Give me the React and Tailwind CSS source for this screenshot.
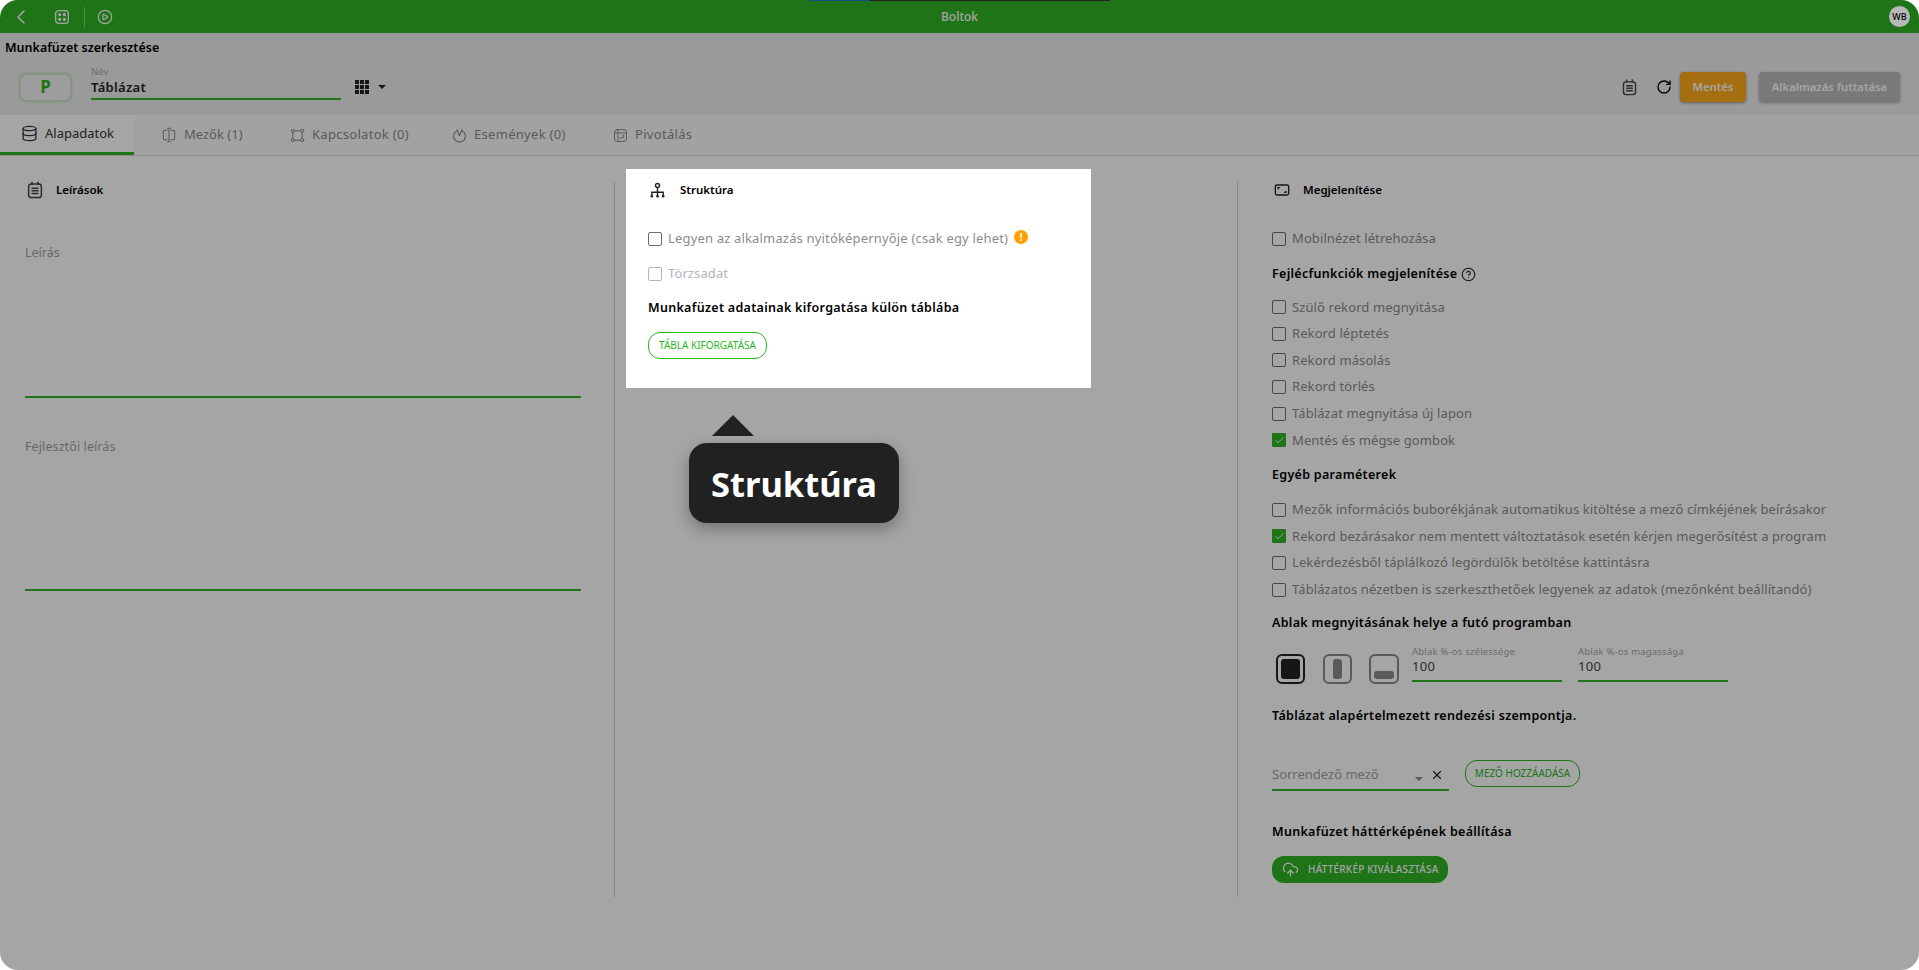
import React from "react";
import { ChevronLeft, CirclePlay, RotateCw, Database, CloudUpload, X, CircleHelp, Check } from "lucide-react";

function Svg({ className = "", children, fill = "none", sw = 1.6 }) {
  return (
    <svg viewBox="0 0 24 24" fill={fill} stroke="currentColor" strokeWidth={sw} strokeLinecap="round" strokeLinejoin="round" className={className}>
      {children}
    </svg>
  );
}

function NotepadIcon({ className }) {
  return (
    <Svg className={className} sw={2}>
      <rect x="3.5" y="4" width="17" height="18" rx="3.5" />
      <path d="M8 1.5v3M16 1.5v3M8 9.5h8M8 13h8M8 16.5h8" />
    </Svg>
  );
}

function DiceIcon({ className }) {
  return (
    <Svg className={className} sw={2}>
      <rect x="2.5" y="2.5" width="19" height="19" rx="5" />
      <circle cx="8.5" cy="8.5" r="1.4" fill="currentColor" />
      <circle cx="15.5" cy="8.5" r="1.4" fill="currentColor" />
      <circle cx="8.5" cy="15.5" r="1.4" fill="currentColor" />
      <circle cx="15.5" cy="15.5" r="1.4" fill="currentColor" />
    </Svg>
  );
}

function FieldsIcon({ className }) {
  return (
    <Svg className={className}>
      <path d="M9 5H5a1.5 1.5 0 0 0-1.5 1.5v11A1.5 1.5 0 0 0 5 19h4M15 5h4a1.5 1.5 0 0 1 1.5 1.5v11a1.5 1.5 0 0 1-1.5 1.5h-4M12 2v20M9.5 2h5M9.5 22h5" />
    </Svg>
  );
}

function LinksIcon({ className }) {
  return (
    <Svg className={className}>
      <circle cx="4.5" cy="4.5" r="2.5" />
      <circle cx="19.5" cy="4.5" r="2.5" />
      <circle cx="4.5" cy="19.5" r="2.5" />
      <circle cx="19.5" cy="19.5" r="2.5" />
      <path d="M7 4.5h10M7 19.5h10M4.5 7v10M19.5 7v10" />
    </Svg>
  );
}

function EventsIcon({ className }) {
  return (
    <Svg className={className} sw={1.8}>
      <path d="M8 4.5a9.5 9.5 0 1 0 8 0" />
      <path d="M8 2.5l4 10 4-10" />
    </Svg>
  );
}

function PivotIcon({ className }) {
  return (
    <Svg className={className}>
      <rect x="2.5" y="2.5" width="19" height="19" rx="4" />
      <path d="M2.5 8h19M8 2.5v19M17 12v3.5h-4M15.5 11l1.5 1M11.5 15.5l1.5 1.500" />
    </Svg>
  );
}

function NetworkIcon({ className }) {
  return (
    <svg viewBox="0 0 24 24" fill="none" stroke="currentColor" strokeWidth="2" className={className}>
      <circle cx="12" cy="5" r="2.8" />
      <path d="M12 8v6M4 20v-5.5h16V20M12 14v6" />
      <circle cx="4" cy="20" r="1.8" fill="currentColor" stroke="none" />
      <circle cx="12" cy="20" r="1.8" fill="currentColor" stroke="none" />
      <circle cx="20" cy="20" r="1.8" fill="currentColor" stroke="none" />
    </svg>
  );
}

function ScreenIcon({ className }) {
  return (
    <Svg className={className} sw={2}>
      <rect x="2" y="4.5" width="20" height="15" rx="2.5" />
      <path d="M6 10V8.5h2M18 14v1.5h-2" />
    </Svg>
  );
}

function Checkbox({ checked, faded }) {
  if (checked) {
    return (
      <span className="w-[14px] h-[14px] rounded-[1px] bg-[#32b426] flex items-center justify-center shrink-0">
        <Check className="w-[11px] h-[11px] text-white" strokeWidth={2} />
      </span>
    );
  }
  return <span className={`w-[14px] h-[14px] rounded-[2px] border-[1.5px] shrink-0 ${faded ? "border-[#b5b5b5]" : "border-[#6f6f6f]"}`} />;
}

function CheckRow({ label, checked, faded, className = "h-[26.6px]", labelClass = "tracking-[0.1px]" }) {
  return (
    <div className={`flex items-center gap-[6px] ${className}`}>
      <Checkbox checked={checked} faded={faded} />
      <span className={`text-[13px] ${labelClass} ${faded ? "text-[#b4b4bc]" : "text-[#8c8c8c]"}`}>{label}</span>
    </div>
  );
}

function SectionHead({ icon, title, gap }) {
  return (
    <div className={`flex items-center h-[16px] ${gap}`}>
      {icon}
      <span className="text-[11.5px] font-semibold text-black">{title}</span>
    </div>
  );
}

function Heading({ children, className = "" }) {
  return <div className={`h-[22px] flex items-center text-[12.5px] tracking-[0.3px] font-semibold text-black ${className}`}>{children}</div>;
}

function Tab({ icon, label, active, className = "", labelClass = "" }) {
  return (
    <div className={`h-[40px] flex items-center gap-[7px] shrink-0 ${active ? "bg-white border-b-[3px] border-[#32b426] text-[#333]" : "text-[#8c8c8c]"} ${className}`}>
      {icon}
      <span className={`text-[13px] ${labelClass}`}>{label}</span>
    </div>
  );
}

function PercentField({ label, className = "" }) {
  return (
    <div className={`w-[150px] h-[36px] -mt-[2px] border-b-2 border-[#32b426] ${className}`}>
      <div className="text-[9.5px] tracking-[0.2px] leading-[11px] text-[#a8a8a8]">{label}</div>
      <div className="text-[13px] tracking-[0.3px] leading-[19px] text-[#444]">100</div>
    </div>
  );
}

function WindowOption({ selected, children, className = "" }) {
  return (
    <div className={`w-[29px] h-[30px] rounded-[6px] border-2 flex p-[3px] ${selected ? "border-[#222]" : "border-[#8c8c8c]"} ${className}`}>
      {children}
    </div>
  );
}

export default function App() {
  return (
    <div className="relative w-full h-[970px] bg-white overflow-hidden font-['Noto_Sans',sans-serif]">
      <div className="h-full rounded-[18px] overflow-hidden flex flex-col bg-white">
        {/* top bar */}
        <div className="relative h-[33px] shrink-0 bg-[#32b426] flex items-center text-white">
          <div className="absolute top-0 left-[809px] w-[301px] h-px bg-[#333]">
            <div className="w-[60px] h-px bg-[#1f7fd8]" />
          </div>
          <ChevronLeft className="w-[24px] h-[24px] ml-[9px]" strokeWidth={1.5} />
          <DiceIcon className="w-[16px] h-[16px] ml-[21px]" />
          <div className="w-px h-[20px] bg-white/40 ml-[14px]" />
          <CirclePlay className="w-[16px] h-[16px] ml-[12px]" strokeWidth={1.8} />
          <span className="absolute left-0 right-0 text-center text-[12px] font-medium">Boltok</span>
          <span className="relative z-20 ml-auto mr-[9px] w-[21px] h-[21px] rounded-full bg-[#b8b8b8] text-black text-[9px] font-medium flex items-center justify-center">WB</span>
        </div>

        {/* page header */}
        <div className="h-[82px] shrink-0 bg-[#eeeeee] flex flex-col">
          <div className="h-[28px] pt-[2px] pl-[5px] flex items-center text-[12.5px] font-semibold text-black">Munkafüzet szerkesztése</div>
          <div className="flex items-center h-[34px] mt-[9px]">
            <div className="ml-[20px] w-[51px] h-[27px] rounded-[6px] bg-[#f3f3f3] border border-[#cfe8cb] shadow-[0_0_3px_#32b42680] flex items-center justify-center text-[17px] font-bold text-[#32b426]">P</div>
            <div className="ml-[20px] w-[250px] h-[33px] self-start -mt-[3px] border-b-2 border-[#32b426]">
              <div className="text-[9.5px] leading-[10px] text-[#a8a8a8]">Név</div>
              <div className="text-[13px] tracking-[0.3px] leading-[20px] font-semibold text-[#222]">Táblázat</div>
            </div>
            <div className="ml-[14px] grid grid-cols-3 gap-[1px] w-[14px]">
              {Array.from({ length: 9 }).map((_, i) => (
                <span key={i} className="w-[4px] h-[4px] bg-[#222]" />
              ))}
            </div>
            <span className="ml-[9px] w-0 h-0 border-l-[4px] border-r-[4px] border-t-[4px] border-l-transparent border-r-transparent border-t-[#222]" />
            <NotepadIcon className="ml-auto w-[17px] h-[19px] text-[#444]" />
            <RotateCw className="ml-[18px] w-[16px] h-[16px] text-black" strokeWidth={2} />
            <button className="ml-[8px] w-[66px] h-[30px] rounded-[4px] bg-[#ffab19] text-white text-[11.25px] font-semibold shadow-[0_1px_3px_rgba(0,0,0,0.4)]">Mentés</button>
            <button className="ml-[13px] mr-[19px] w-[141px] h-[30px] rounded-[4px] bg-[#bcbcbc] text-white text-[11.25px] font-semibold shadow-[0_1px_3px_rgba(0,0,0,0.3)]">Alkalmazás futtatása</button>
          </div>
        </div>

        {/* tabs */}
        <div className="h-[41px] shrink-0 bg-[#fbfbfb] border-b border-[#dcdcdc] flex">
          <Tab active label="Alapadatok" icon={<Database className="w-[17px] h-[17px]" strokeWidth={1.8} />} className="w-[134px] pl-[21px]" />
          <Tab label="Mezők (1)" icon={<FieldsIcon className="w-[16px] h-[16px]" />} className="w-[156px] pl-[27px]" />
          <Tab label="Kapcsolatok (0)" labelClass="tracking-[0.3px]" icon={<LinksIcon className="w-[15px] h-[15px]" />} className="w-[162px]" />
          <Tab label="Események (0)" labelClass="tracking-[0.3px]" icon={<EventsIcon className="w-[15px] h-[15px]" />} className="w-[161px]" />
          <Tab label="Pivotálás" labelClass="tracking-[0.3px]" icon={<PivotIcon className="w-[15px] h-[15px]" />} />
        </div>

        {/* three settings columns */}
        <div className="grid grid-cols-[615px_623px_1fr] pt-[26px]">
          <div className="h-[715px] border-r border-[#d0d0d0] pl-[25px] pr-[33px]">
            <SectionHead title="Leírások" gap="gap-[12px] pl-[1px]" icon={<NotepadIcon className="w-[18px] h-[20px] text-[#444]" />} />
            <div className="mt-[44px] h-[156px] border-b-2 border-[#32b426] text-[12.5px] leading-[22px] text-[#a3a3a3]">Leírás</div>
            <div className="mt-[38px] h-[155px] border-b-2 border-[#32b426] text-[12.5px] tracking-[0.1px] leading-[22px] text-[#a3a3a3]">Fejlesztői leírás</div>
          </div>

          <div className="h-[715px] border-r border-[#d0d0d0] pl-[33px]">
            <SectionHead title="Struktúra" gap="gap-[14px] pl-[1px]" icon={<NetworkIcon className="w-[17px] h-[17px] text-[#222]" />} />
            <div className="mt-[28px] h-[26px] flex items-center">
              <CheckRow label="Legyen az alkalmazás nyitóképernyője (csak egy lehet)" className="" labelClass="tracking-[0.17px]" />
              <span className="ml-[6px] -mt-[4px] w-[14px] h-[14px] rounded-full bg-[#ffa000] text-white text-[10px] font-bold flex items-center justify-center">!</span>
            </div>
            <CheckRow faded label="Törzsadat" className="mt-[9px] h-[26px]" />
            <Heading className="mt-[10px]">Munkafüzet adatainak kiforgatása külön táblába</Heading>
            <button className="mt-[13px] w-[119px] h-[27px] rounded-[12px] border-[1.5px] border-[#2ab51f] text-[10px] text-[#2ab51f]">TÁBLA KIFORGATÁSA</button>
          </div>

          <div className="pl-[34px]">
            <SectionHead title="Megjelenítése" gap="gap-[13px] pl-[2px]" icon={<ScreenIcon className="w-[16px] h-[16px] text-[#222]" />} />
            <CheckRow label="Mobilnézet létrehozása" className="mt-[28px] h-[26px]" />
            <Heading className="mt-[11px] gap-[4px]">
              Fejlécfunkciók megjelenítése
              <CircleHelp className="w-[15px] h-[15px] text-[#222]" strokeWidth={1.8} />
            </Heading>
            <div className="mt-[9px]">
              <CheckRow label="Szülő rekord megnyitása" />
              <CheckRow label="Rekord léptetés" />
              <CheckRow label="Rekord másolás" />
              <CheckRow label="Rekord törlés" />
              <CheckRow label="Táblázat megnyitása új lapon" />
              <CheckRow checked label="Mentés és mégse gombok" />
            </div>
            <Heading className="mt-[11px]">Egyéb paraméterek</Heading>
            <div className="mt-[10px]">
              <CheckRow label="Mezők információs buborékjának automatikus kitöltése a mező címkéjének beírásakor" />
              <CheckRow checked label="Rekord bezárásakor nem mentett változtatások esetén kérjen megerősítést a program" />
              <CheckRow label="Lekérdezésből táplálkozó legördülők betöltése kattintásra" />
              <CheckRow label="Táblázatos nézetben is szerkeszthetőek legyenek az adatok (mezőnként beállítandó)" />
            </div>
            <Heading className="mt-[9px]">Ablak megnyitásának helye a futó programban</Heading>
            <div className="mt-[14px] flex h-[38px]">
              <WindowOption selected className="ml-[4px] mt-[6px]"><span className="flex-1 rounded-[3px] bg-[#222]" /></WindowOption>
              <WindowOption className="ml-[18px] mt-[6px] justify-center"><span className="w-[9px] rounded-[3px] bg-[#8c8c8c]" /></WindowOption>
              <WindowOption className="ml-[17px] mt-[6px] items-end w-[30px]"><span className="flex-1 h-[8px] rounded-[3px] bg-[#8c8c8c]" /></WindowOption>
              <PercentField label="Ablak %-os szélessége" className="ml-[13px]" />
              <PercentField label="Ablak %-os magassága" className="ml-[16px]" />
            </div>
            <Heading className="mt-[19px]">Táblázat alapértelmezett rendezési szempontja.</Heading>
            <div className="mt-[33px] flex items-start">
              <div className="relative w-[177px] h-[31px] border-b-2 border-[#32b426] flex items-center text-[13px] text-[#a3a3a3]">
                Sorrendező mező
                <span className="absolute right-[26px] top-[17px] w-0 h-0 border-l-[4px] border-r-[4px] border-t-[4px] border-l-transparent border-r-transparent border-t-[#888]" />
                <X className="absolute right-[5px] top-[8px] w-[14px] h-[14px] text-[#222]" strokeWidth={2} />
              </div>
              <button className="ml-[16px] w-[115px] h-[27px] rounded-[12px] border-[1.5px] border-[#2ab51f] text-[10px] text-[#2ab51f]">MEZŐ HOZZÁADÁSA</button>
            </div>
            <Heading className="mt-[30px]">Munkafüzet háttérképének beállítása</Heading>
            <button className="mt-[13px] w-[176px] h-[27px] rounded-[12px] bg-[#32b426] text-white text-[10px] tracking-[0.2px] font-medium flex items-center pl-[10px] gap-[9px]">
              <CloudUpload className="w-[17px] h-[17px]" strokeWidth={1.8} />
              HÁTTÉRKÉP KIVÁLASZTÁSA
            </button>
          </div>
        </div>
      </div>

      {/* guided tour overlay: dims everything except the highlighted panel */}
      <div className="absolute inset-0 rounded-[18px] overflow-hidden pointer-events-none z-10">
        <div className="absolute left-[626px] top-[169px] w-[465px] h-[219px] shadow-[0_0_0_2000px_rgba(0,0,0,0.353)]" />
        <div className="absolute left-[712px] top-[415px] w-0 h-0 border-l-[21px] border-r-[21px] border-b-[21px] border-l-transparent border-r-transparent border-b-[#212121]" />
        <div className="absolute left-[689px] top-[443px] w-[210px] h-[80px] pt-[2px] rounded-[18px] bg-[#212121] shadow-[0_6px_16px_rgba(0,0,0,0.3)] flex items-center justify-center text-[34.5px] font-bold text-white">Struktúra</div>
      </div>
    </div>
  );
}
